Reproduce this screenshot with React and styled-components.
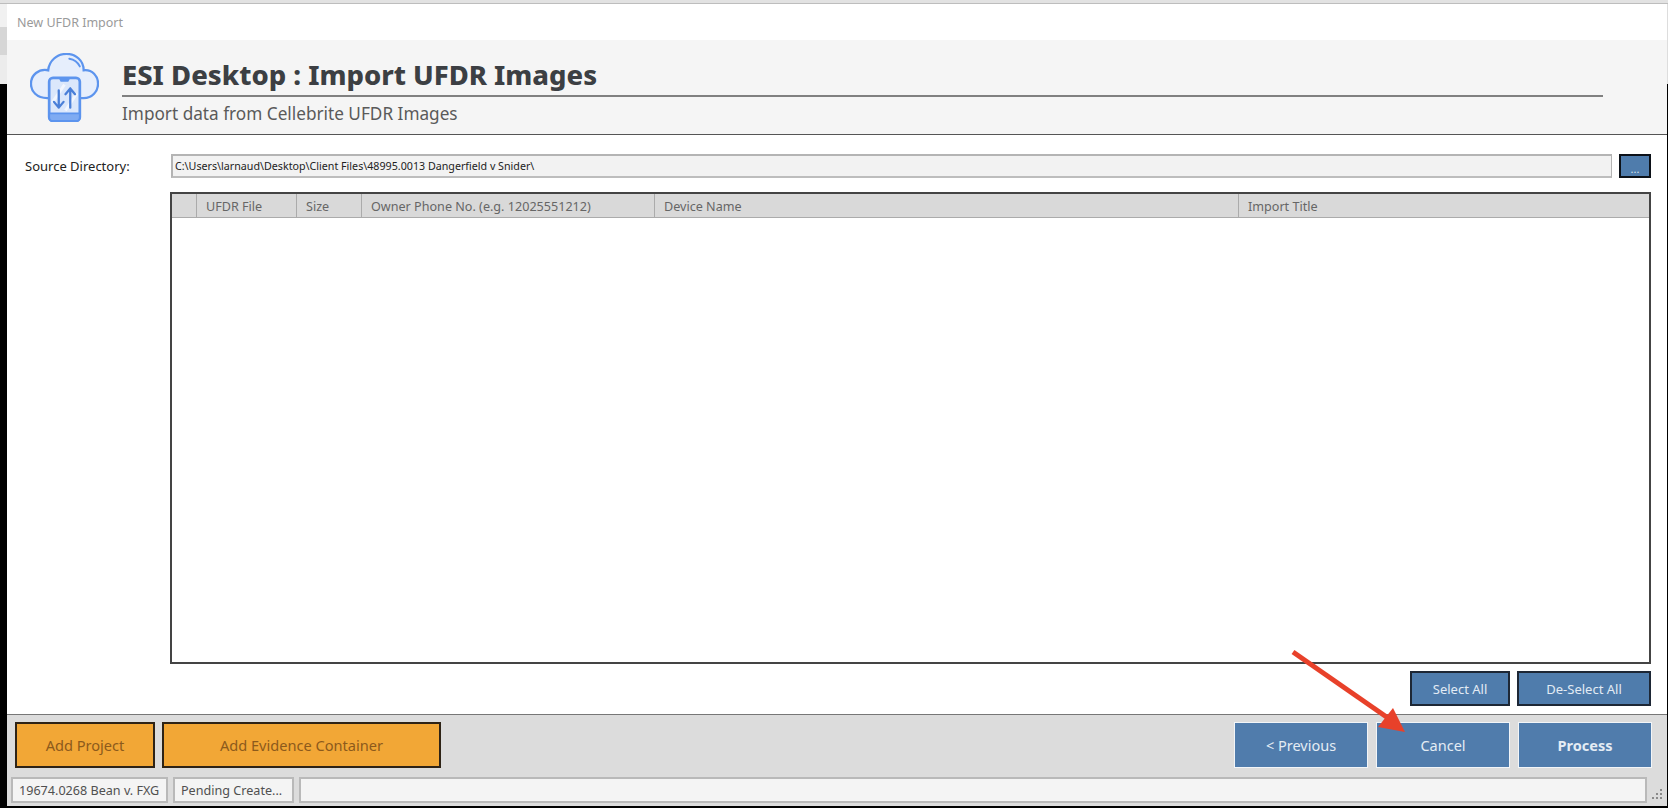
import React from 'react';
import styled, {createGlobalStyle} from 'styled-components';

const GlobalStyle = createGlobalStyle`
  html, body {
    margin: 0;
    padding: 0;
    background: #000000;
    overflow: hidden;
  }
`

const Page = styled.div`
  position: relative;
  width: 1668px;
  height: 808px;
  display: flex;
  flex-direction: column;
  font-family: "Noto Sans", "Open Sans", sans-serif;
  overflow: hidden;
`

const TopEdge = styled.div`
  height: 4px;
  background: #e2e2e2;
  border-bottom: 1px solid #bdbdbd;
  box-sizing: border-box;
`

const Desktop = styled.div`
  flex: 1;
  display: flex;
  min-height: 0;
`

const SideEdge = styled.div`
  width: ${props => props.$width}px;
  display: flex;
  flex-direction: column;
  flex-shrink: 0;
`

const EdgePiece = styled.div`
  height: ${props => props.$height}px;
  background: ${props => props.$color};
`

const Window = styled.div`
  flex: 1;
  display: flex;
  flex-direction: column;
  min-width: 0;
  margin-bottom: 2px;
  background: #ffffff;
`

const TitleBar = styled.div`
  height: 36px;
  padding-left: 10px;
  display: flex;
  align-items: center;
  font-size: 12.5px;
  color: #9a9a9a;
`

const Header = styled.header`
  height: 94px;
  flex-shrink: 0;
  display: flex;
  background: #f5f5f5;
  border-bottom: 1px solid #555555;
`

const LogoBox = styled.div`
  width: 115px;
  flex-shrink: 0;
  padding: 13px 0 0 23px;
  box-sizing: border-box;
`

const HeaderText = styled.div`
  width: 1481px;
`

const Heading = styled.h1`
  margin: 0;
  height: 57px;
  box-sizing: border-box;
  padding-top: 16px;
  border-bottom: 2px solid #808080;
  font-size: 27.4px;
  line-height: 37px;
  font-weight: 800;
  color: #3c3f43;
`

const SubHeading = styled.div`
  margin-top: 5px;
  font-size: 17.2px;
  line-height: 24px;
  color: #5a5a5a;
`

const Content = styled.main`
  flex: 1;
  min-height: 0;
  display: flex;
  flex-direction: column;
  gap: 14px;
  padding: 19px 16px 8px 18px;
`

const SourceRow = styled.div`
  display: flex;
  align-items: center;
  height: 24px;
`

const SourceLabel = styled.label`
  width: 146px;
  flex-shrink: 0;
  font-size: 13px;
  color: #222222;
`

const PathBox = styled.div`
  flex: 1;
  height: 24px;
  box-sizing: border-box;
  padding-left: 2px;
  display: flex;
  align-items: center;
  background: #f2f2f2;
  border: 2px solid #b4b4b4;
  border-right-width: 1px;
  border-bottom-color: #bdbdbd;
  font-size: 10.7px;
  color: #222222;
`

const BrowseButton = styled.button`
  width: 32px;
  height: 24px;
  margin-left: 7px;
  padding: 4px 0 0;
  background: #4f7cac;
  border: 2px solid #0c1118;
  color: #d6e2ef;
  font-family: inherit;
  font-size: 11px;
  line-height: 1;
`

const GridFrame = styled.div`
  margin-left: 145px;
  flex: 1;
  min-height: 0;
  border: 2px solid #444444;
  background: #ffffff;
`

const GridHead = styled.div`
  height: 24px;
  display: grid;
  grid-template-columns: 25px 100px 65px 293px 584px 1fr;
  background: #d9d9d9;
  border-bottom: 1px solid #ababab;
  box-sizing: border-box;
`

const HeadCell = styled.div`
  padding: 1px 0 0 9px;
  display: flex;
  align-items: center;
  border-right: 1px solid #ababab;
  font-size: 12.6px;
  color: #666666;
  white-space: nowrap;

  &:last-child {
    border-right: none;
  }
`

const SelectRow = styled.div`
  display: flex;
  justify-content: flex-end;
  gap: 7px;
  margin-top: -7px;
`

const SelectButton = styled.button`
  width: ${props => props.$width}px;
  height: 35px;
  padding: 0;
  background: #4f7cac;
  border: 2px solid #1d2735;
  color: #e2ebf4;
  font-family: inherit;
  font-size: 13px;
`

const Footer = styled.footer`
  height: 92px;
  flex-shrink: 0;
  box-sizing: border-box;
  display: flex;
  flex-direction: column;
  background: #dcdcdc;
  border-top: 1px solid #777777;
`

const ActionRow = styled.div`
  display: flex;
  justify-content: space-between;
  padding: 7px 15px 0 8px;
  height: 53px;
  box-sizing: border-box;
`

const ButtonGroup = styled.div`
  display: flex;
  gap: ${props => props.$gap}px;
`

const OrangeButton = styled.button`
  width: ${props => props.$width}px;
  height: 46px;
  padding: 0;
  background: #f2a736;
  border: 2px solid #2e2316;
  color: #8c5a1c;
  font-family: inherit;
  font-size: 14.6px;
`

const NavButton = styled.button`
  width: 134px;
  height: 46px;
  padding: 0;
  background: #507cac;
  border: 1px solid #f2f5f8;
  color: #e4ecf4;
  font-family: inherit;
  font-size: 14.5px;
  font-weight: ${props => (props.$primary ? 700 : 400)};
`

const StatusBar = styled.div`
  position: relative;
  display: flex;
  gap: 5px;
  margin-top: 9px;
  padding: 0 20px 0 4px;
  height: 26px;
`

const StatusCell = styled.div`
  box-sizing: border-box;
  width: ${props => (props.$width ? `${props.$width}px` : 'auto')};
  flex: ${props => (props.$width ? '0 0 auto' : '1')};
  padding-left: 6px;
  display: flex;
  align-items: center;
  background: #f4f4f4;
  border: 2px solid #b9b9b9;
  font-size: 12.6px;
  color: #505050;
  white-space: nowrap;
`

const Grip = styled.svg`
  position: absolute;
  right: 3px;
  bottom: 2px;
`

const ArrowOverlay = styled.svg`
  position: absolute;
  left: 0;
  top: 0;
  pointer-events: none;
`

const CloudPhoneIcon = () => (
    <svg width="69" height="69" viewBox="0 0 72 72" fill="none">
        <path d="M18 47 C7 47 1 40 1 32 C1 23 9 16 19 18 C20 8 28 1 38 1 C48 1 56 8 56 18 C65 17 71 24 71 32 C71 40 65 47 56 47 Z"
              fill="#e6eefc" stroke="#5c94ee" strokeWidth="2.4"/>
        <path d="M41 6 C47 7 50 10 52 14" stroke="#5c94ee" strokeWidth="2" strokeLinecap="round"/>
        <rect x="20" y="26" width="32" height="45" rx="4" fill="#dbe7fb" stroke="#5c94ee" strokeWidth="2.8"/>
        <path d="M20 63 H52 V67 C52 69.5 50 71 48 71 H24 C22 71 20 69.5 20 67 Z" fill="#7fabf2" stroke="#5c94ee" strokeWidth="2"/>
        <path d="M30 26 H42 L40 30 H32 Z" fill="#5c94ee"/>
        <path d="M23 52 L36 33 M37 60 L49 42" stroke="#f2f6fe" strokeWidth="3"/>
        <path d="M30 39 V57 M25 51 L30 57 L35 51" stroke="#4a7fd8" strokeWidth="2.4" strokeLinecap="round" strokeLinejoin="round"/>
        <path d="M42 57 V37 M37 43 L42 37 L47 43" stroke="#4a7fd8" strokeWidth="2.4" strokeLinecap="round" strokeLinejoin="round"/>
    </svg>
);

const columns = ['', 'UFDR File', 'Size', 'Owner Phone No. (e.g. 12025551212)', 'Device Name', 'Import Title'];

const App = () => (
    <Page>
        <GlobalStyle/>
        <TopEdge/>
        <Desktop>
            <SideEdge $width={7}>
                <EdgePiece $height={23} $color="#f1f1f1"/>
                <EdgePiece $height={28} $color="#d6d6d6"/>
                <EdgePiece $height={29} $color="#ececec"/>
            </SideEdge>
            <Window>
                <TitleBar>New UFDR Import</TitleBar>
                <Header>
                    <LogoBox><CloudPhoneIcon/></LogoBox>
                    <HeaderText>
                        <Heading>ESI Desktop : Import UFDR Images</Heading>
                        <SubHeading>Import data from Cellebrite UFDR Images</SubHeading>
                    </HeaderText>
                </Header>
                <Content>
                    <SourceRow>
                        <SourceLabel>Source Directory:</SourceLabel>
                        <PathBox>C:\Users\larnaud\Desktop\Client Files\48995.0013 Dangerfield v Snider\</PathBox>
                        <BrowseButton>...</BrowseButton>
                    </SourceRow>
                    <GridFrame>
                        <GridHead>
                            {columns.map((name, i) => <HeadCell key={i}>{name}</HeadCell>)}
                        </GridHead>
                    </GridFrame>
                    <SelectRow>
                        <SelectButton $width={100}>Select All</SelectButton>
                        <SelectButton $width={134}>De-Select All</SelectButton>
                    </SelectRow>
                </Content>
                <Footer>
                    <ActionRow>
                        <ButtonGroup $gap={7}>
                            <OrangeButton $width={140}>Add Project</OrangeButton>
                            <OrangeButton $width={279}>Add Evidence Container</OrangeButton>
                        </ButtonGroup>
                        <ButtonGroup $gap={8}>
                            <NavButton>&lt; Previous</NavButton>
                            <NavButton>Cancel</NavButton>
                            <NavButton $primary>Process</NavButton>
                        </ButtonGroup>
                    </ActionRow>
                    <StatusBar>
                        <StatusCell $width={157}>19674.0268 Bean v. FXG</StatusCell>
                        <StatusCell $width={121}>Pending Create...</StatusCell>
                        <StatusCell/>
                        <Grip width="14" height="14" viewBox="0 0 14 14" fill="#8a8a8a">
                            <rect x="10" y="2" width="2" height="2"/>
                            <rect x="6" y="6" width="2" height="2"/>
                            <rect x="10" y="6" width="2" height="2"/>
                            <rect x="2" y="10" width="2" height="2"/>
                            <rect x="6" y="10" width="2" height="2"/>
                            <rect x="10" y="10" width="2" height="2"/>
                        </Grip>
                    </StatusBar>
                </Footer>
            </Window>
            <SideEdge $width={1}>
                <EdgePiece $height={80} $color="#dddddd"/>
            </SideEdge>
        </Desktop>
        <ArrowOverlay width="1668" height="808" viewBox="0 0 1668 808">
            <path d="M1293 652 L1388 718" stroke="#e8412a" strokeWidth="5" fill="none"/>
            <polygon points="1393,708 1378,727 1405,732" fill="#e8412a"/>
        </ArrowOverlay>
    </Page>
);

export default App;
